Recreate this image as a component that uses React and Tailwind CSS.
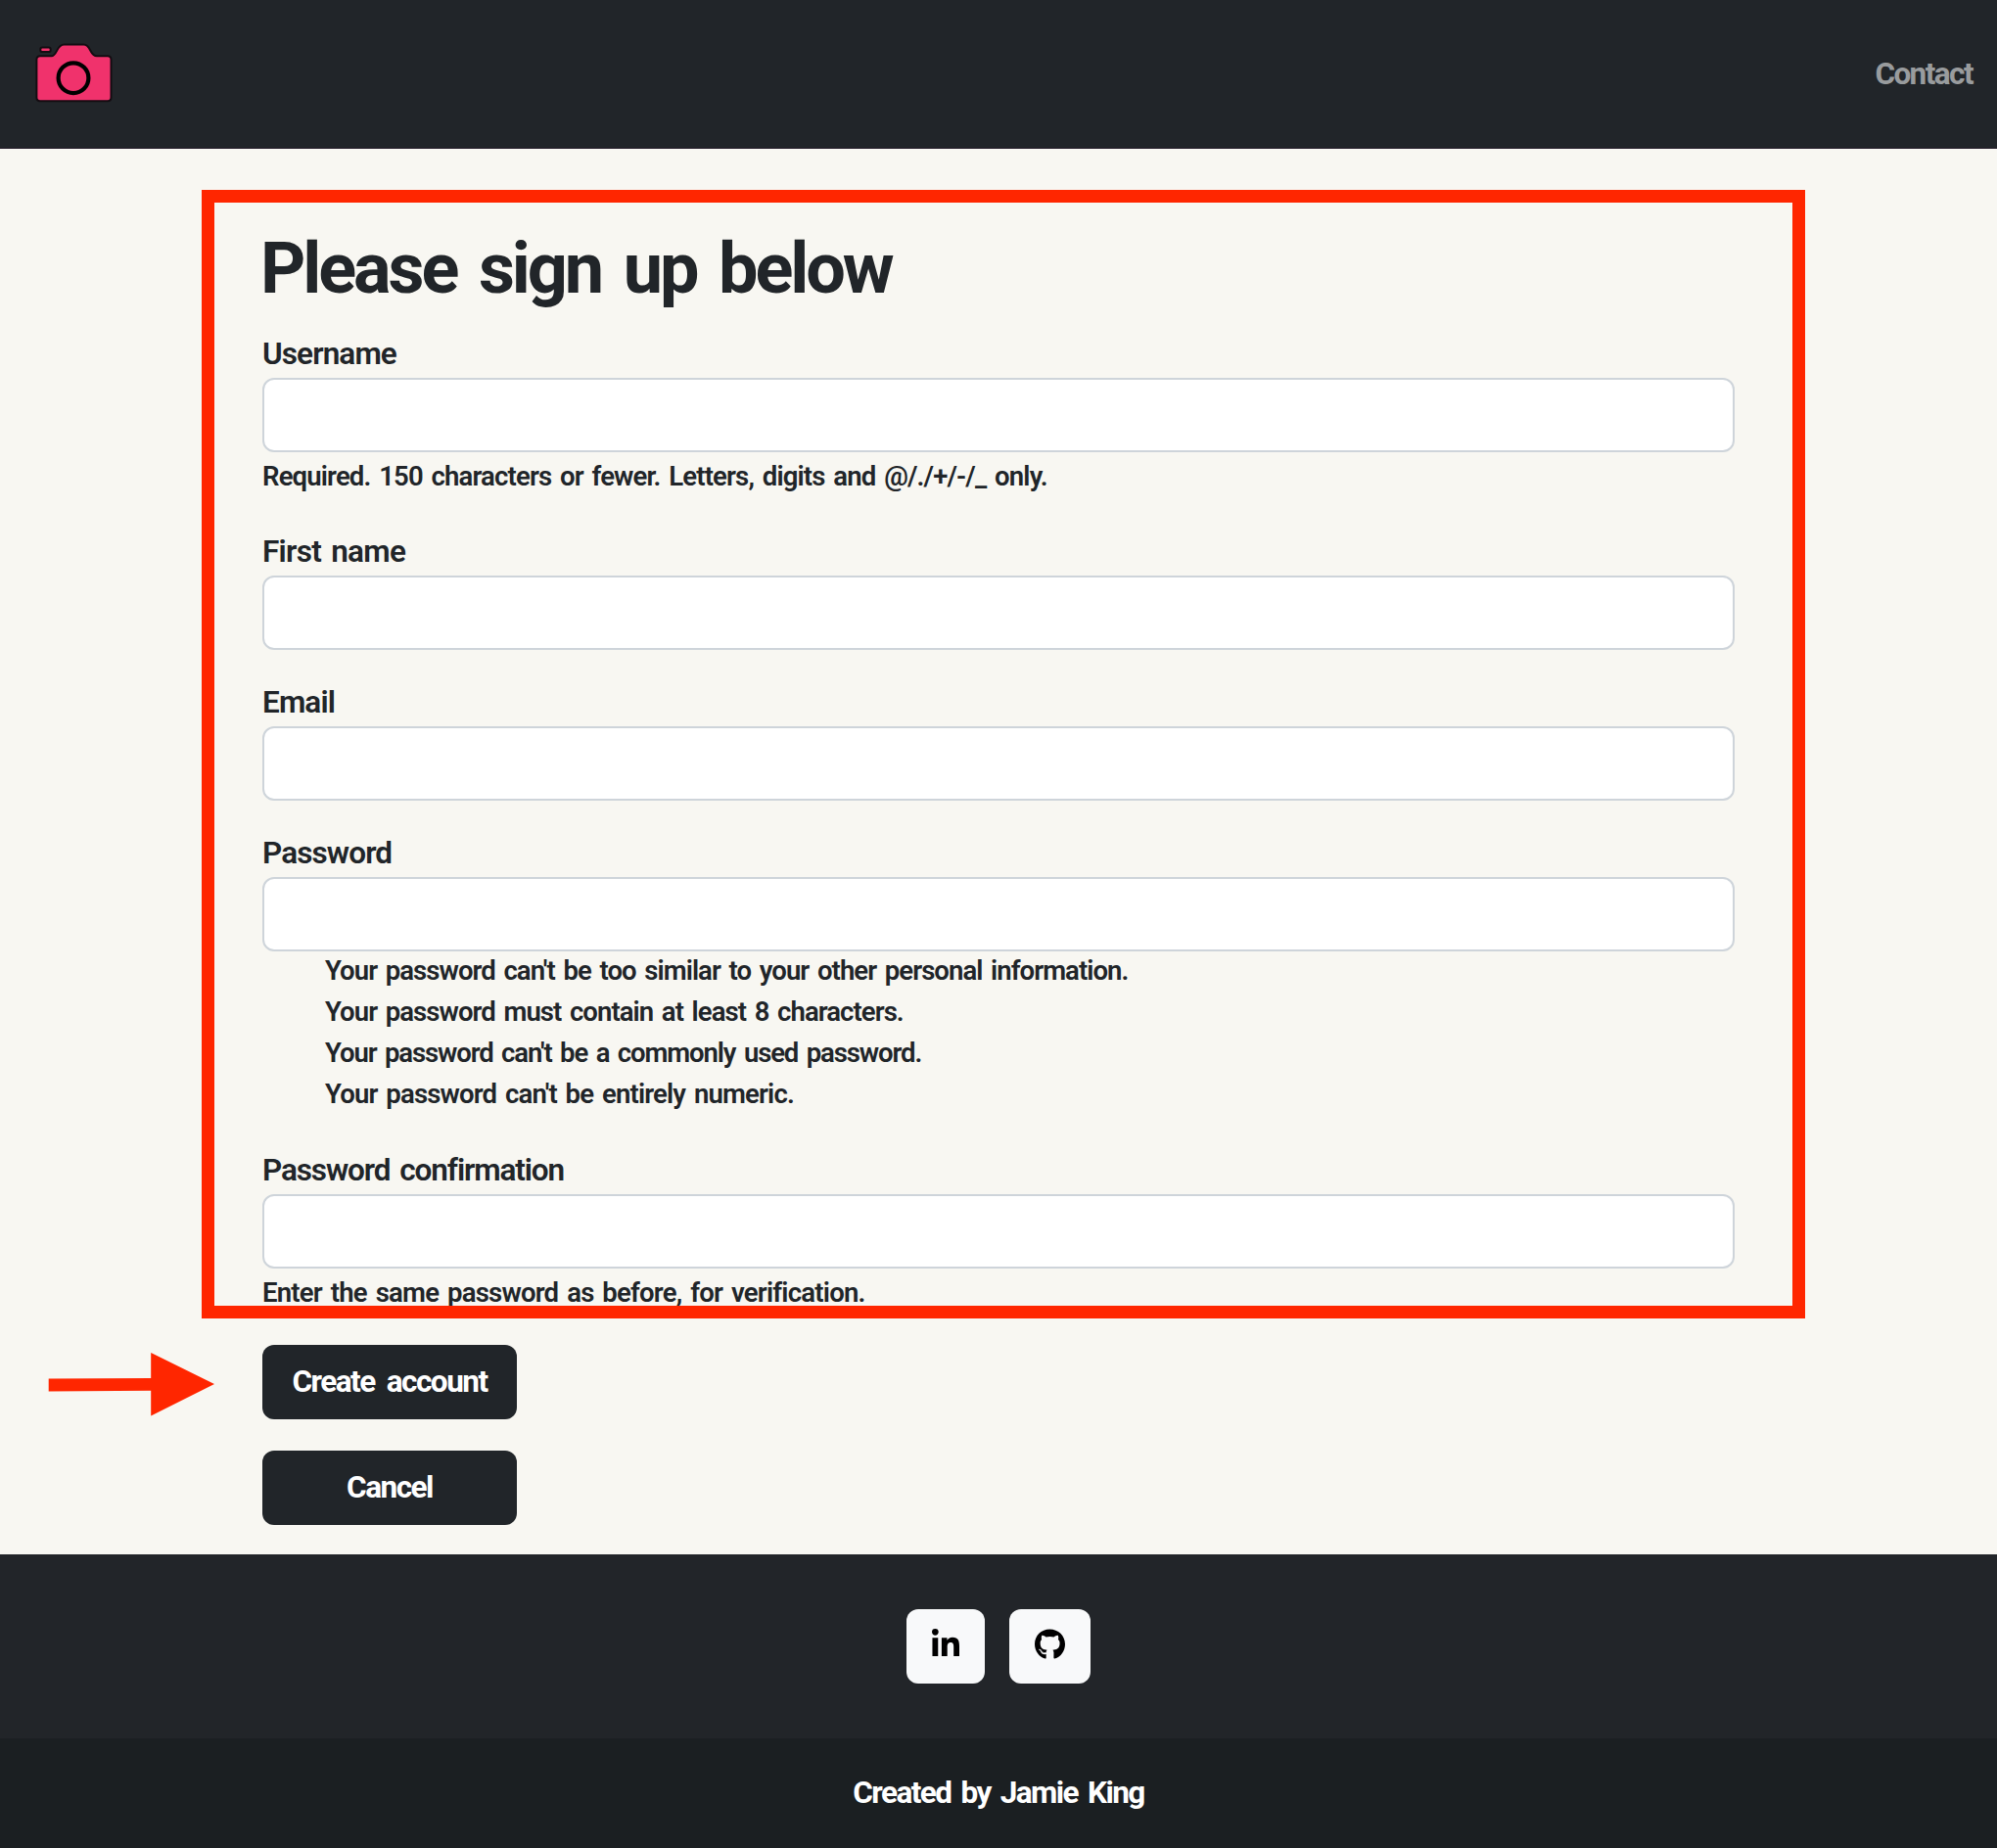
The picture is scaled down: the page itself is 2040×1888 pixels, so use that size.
import React from "react";

function CameraLogo() {
  return (
    <svg className="mb-[3px] h-[64px] w-[82px]" viewBox="35 42 82 64" fill="#f0326c" stroke="#140d12" strokeWidth="2">
      <rect x="41.300" y="48.600" width="10.400" height="4.400" rx="1.800" />
      <path d="M41 57.300H52.500C58.500 57.300 57.500 45.600 65.500 45.600H85.500C93 45.600 91.500 57.300 99 57.300H110C112.300 57.300 113.500 58.500 113.500 61V99.500C113.500 102 112.300 103.300 110 103.300H41C38.700 103.300 37.400 102 37.400 99.500V61C37.400 58.500 38.700 57.300 41 57.300z" />
      <circle cx="75" cy="79.700" r="15.400" stroke="#000" strokeWidth="4.200" />
    </svg>
  );
}

function LinkedInIcon() {
  return (
    <svg className="h-[28px] w-[28px]" viewBox="0 0 448 448" fill="#000">
      <path d="M100.280 448H7.400V148.900h92.880zM53.790 108.100C24.090 108.100 0 83.500 0 53.800a53.790 53.790 0 0 1 107.580 0c0 29.700-24.100 54.300-53.790 54.300zM447.900 448h-92.680V302.400c0-34.700-.7-79.200-48.290-79.200-48.290 0-55.690 37.700-55.690 76.700V448h-92.780V148.900h89.080v40.800h1.300c12.400-23.500 42.690-48.300 87.880-48.300 94 0 111.280 61.900 111.280 142.300V448z" />
    </svg>
  );
}

function GitHubIcon() {
  return (
    <svg className="h-[31px] w-[31px]" viewBox="0 8 496 484" fill="#000">
      <path d="M165.900 397.400c0 2-2.300 3.600-5.200 3.600-3.300.3-5.600-1.300-5.600-3.600 0-2 2.300-3.600 5.200-3.600 3-.3 5.600 1.300 5.600 3.600zm-31.100-4.500c-.7 2 1.300 4.300 4.300 4.900 2.600 1 5.600 0 6.200-2s-1.300-4.300-4.300-5.200c-2.600-.7-5.500.3-6.200 2.300zm44.200-1.700c-2.900.7-4.900 2.600-4.600 4.900.3 2 2.900 3.300 5.900 2.600 2.900-.7 4.900-2.600 4.600-4.600-.3-1.900-3-3.200-5.900-2.900zM244.800 8C106.100 8 0 113.300 0 252c0 110.900 69.800 205.800 169.500 239.200 12.800 2.300 17.300-5.600 17.300-12.100 0-6.200-.3-40.400-.3-61.400 0 0-70 15-84.700-29.800 0 0-11.400-29.100-27.800-36.600 0 0-22.900-15.700 1.600-15.400 0 0 24.900 2 38.600 25.800 21.900 38.600 58.600 27.500 72.900 20.900 2.300-16 8.800-27.100 16-33.700-55.900-6.200-112.300-14.300-112.300-110.500 0-27.500 7.600-41.300 23.600-58.900-2.600-6.500-11.100-33.300 2.600-67.900 20.900-6.500 69 27 69 27 20-5.600 41.500-8.500 62.800-8.500s42.800 2.900 62.800 8.500c0 0 48.100-33.600 69-27 13.700 34.700 5.200 61.400 2.600 67.900 16 17.700 25.800 31.500 25.800 58.900 0 96.500-58.900 104.200-114.800 110.500 9.200 7.900 17 22.900 17 46.400 0 33.700-.3 75.400-.3 83.600 0 6.500 4.600 14.400 17.300 12.100C428.200 457.800 496 362.900 496 252 496 113.300 383.500 8 244.800 8zM97.200 352.900c-1.300 1-1 3.300.7 5.200 1.600 1.600 3.900 2.300 5.200 1 1.300-1 1-3.300-.7-5.200-1.600-1.600-3.900-2.300-5.200-1zm-10.800-8.100c-.7 1.300.3 2.900 2.300 3.900 1.600 1 3.600.7 4.300-.7.7-1.300-.3-2.900-2.300-3.900-2-.6-3.600-.3-4.300.7zm32.400 35.600c-1.600 1.300-1 4.300 1.300 6.200 2.300 2.300 5.200 2.600 6.500 1 1.300-1.300.7-4.300-1.300-6.200-2.200-2.300-5.200-2.600-6.500-1zm-11.400-14.700c-1.600 1-1.600 3.600 0 5.900 1.600 2.300 4.300 3.300 5.600 2.300 1.600-1.300 1.600-3.900 0-6.200-1.400-2.300-4-3.300-5.600-2z" />
    </svg>
  );
}

const passwordRules = [
  { text: "Your password can't be too similar to your other personal information.", tracking: "tracking-[-0.034em]" },
  { text: "Your password must contain at least 8 characters.", tracking: "tracking-[-0.034em]" },
  { text: "Your password can't be a commonly used password.", tracking: "tracking-[-0.040em]" },
  { text: "Your password can't be entirely numeric.", tracking: "tracking-[-0.030em]" },
];

function Field({ id, label, type = "text", tracking = "tracking-[-0.028em]", children }) {
  return (
    <div>
      <label
        htmlFor={id}
        className={`block pt-px pb-[3px] text-[31.5px] leading-[42px] [word-spacing:0.1em] ${tracking}`}
      >
        {label}
      </label>
      <input
        id={id}
        type={type}
        className="block h-[76px] w-full rounded-[12px] border-2 border-[#ced4da] bg-white px-6 outline-none"
      />
      {children}
    </div>
  );
}

function Help({ tracking, children }) {
  return (
    <p className={`mt-1 mb-0.5 text-[27.5px] leading-[42px] whitespace-nowrap [word-spacing:0.1em] ${tracking}`}>
      {children}
    </p>
  );
}

function ActionButton({ children }) {
  return (
    <button className="h-[76px] rounded-[12px] bg-[#212529] text-[31.5px] font-bold tracking-[-0.048em] text-white [word-spacing:0.18em]">
      {children}
    </button>
  );
}

export default function App() {
  return (
    <div className="relative flex h-[1888px] w-[2040px] flex-col overflow-hidden bg-[#f8f7f2] font-['Roboto',sans-serif] font-semibold text-[#212529]">
      <nav className="flex h-[152px] items-center justify-between border-b border-[#241d2a] bg-[#212529] pr-[25px] pl-[35px]">
        <CameraLogo />
        <a className="text-[31.5px] leading-[48px] font-bold tracking-[-0.05em] text-[#999c9e]">Contact</a>
      </nav>

      <main className="mx-auto flex w-[1504px] flex-1 flex-col pt-[80px]">
        <h1 className="mb-[22px] -ml-0.5 text-[72px] leading-[86px] font-bold tracking-[-0.043em] [word-spacing:0.11em]">
          Please sign up below
        </h1>
        <form className="flex flex-col gap-8">
          <Field id="username" label="Username">
            <Help tracking="tracking-[-0.0305em]">
              Required. 150 characters or fewer. Letters, digits and @/./+/-/_ only.
            </Help>
          </Field>
          <Field id="first-name" label="First name" tracking="tracking-[-0.023em]" />
          <Field id="email" label="Email" />
          <Field id="password" label="Password" type="password" />
          <ul className="-mt-[33px] mb-[3px] pl-16 text-[27.5px] leading-[42px] [word-spacing:0.1em]">
            {passwordRules.map((rule) => (
              <li key={rule.text} className={rule.tracking}>
                {rule.text}
              </li>
            ))}
          </ul>
          <Field id="confirm" label="Password confirmation" type="password" tracking="tracking-[-0.035em]">
            <Help tracking="tracking-[-0.028em]">Enter the same password as before, for verification.</Help>
          </Field>
        </form>
        <div className="mt-[30px] flex w-[260px] flex-col gap-8">
          <ActionButton>Create account</ActionButton>
          <ActionButton>Cancel</ActionButton>
        </div>
      </main>

      <footer className="h-[300px] bg-[#222529]">
        <div className="flex h-[188px] items-center justify-center gap-[25px]">
          <a className="flex h-[76px] w-[80px] justify-center rounded-[12px] bg-[#f8f9fa] pt-5">
            <LinkedInIcon />
          </a>
          <a className="flex h-[76px] w-[83px] justify-center rounded-[12px] bg-[#f8f9fa] pt-5">
            <GitHubIcon />
          </a>
        </div>
        <div className="flex h-[112px] items-center justify-center bg-[#1b1f22] text-[31.5px] font-bold tracking-[-0.050em] text-white [word-spacing:0.12em]">
          Created by Jamie King
        </div>
      </footer>

      <div className="pointer-events-none absolute top-[194px] left-[206px] h-[1153px] w-[1638px] border-[13px] border-[#ff2600]" />
      <svg className="pointer-events-none absolute top-[1380px] left-[48px] h-[68px] w-[172px]" viewBox="48 1380 172 68" fill="#ff2600">
        <path d="M49.700 1408.500L154.200 1408V1382L219 1414L154.200 1446.600V1420.700L49.700 1421.500z" />
      </svg>
    </div>
  );
}
